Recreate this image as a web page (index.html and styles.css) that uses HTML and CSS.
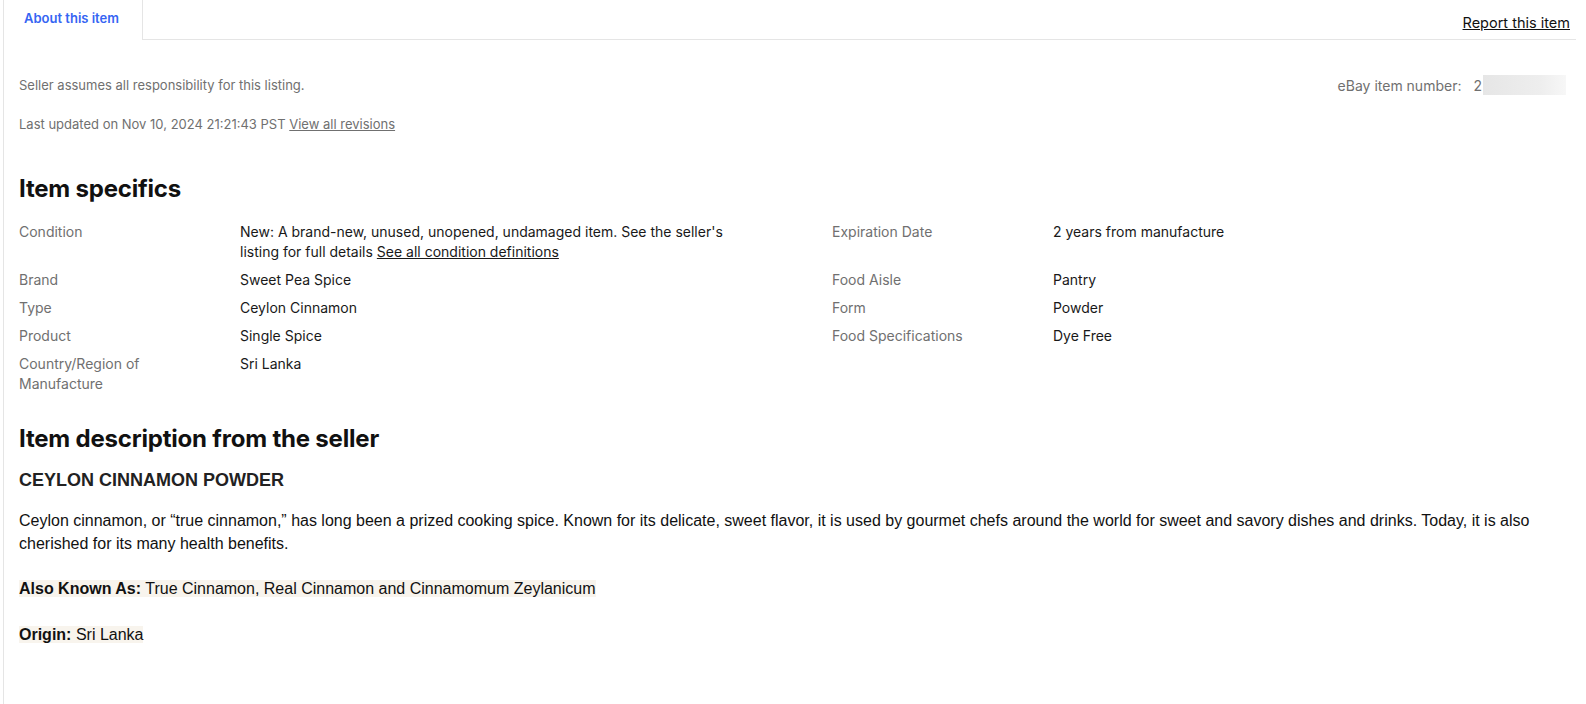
FILE: index.html
```html
<!DOCTYPE html>
<html>
<head>
<meta charset="utf-8">
<link rel="stylesheet" href="styles.css">
</head>
<body>
<div class="panel">
  <div class="tabs">
    <div class="tab active">About this item</div>
    <div class="tabs-rest"><a class="report" href="#">Report this item</a></div>
  </div>
  <div class="content">
    <div class="meta-row">
      <span class="muted">Seller assumes all responsibility for this listing.</span>
      <span class="item-num"><span class="muted">eBay item number:</span><span class="num">2<span class="blur"></span></span></span>
    </div>
    <div class="meta-row updated">
      <span class="muted">Last updated on Nov 10, 2024 21:21:43 PST <a class="muted-link" href="#">View all revisions</a></span>
    </div>

    <h2 class="section-title">Item specifics</h2>
    <div class="specs">
      <div class="spec-row">
        <div class="pair"><div class="lbl">Condition</div><div class="val">New: A brand-new, unused, unopened, undamaged item. See the seller's listing for full details <a href="#" class="link">See all condition definitions</a></div></div>
        <div class="pair"><div class="lbl">Expiration Date</div><div class="val">2 years from manufacture</div></div>
      </div>
      <div class="spec-row">
        <div class="pair"><div class="lbl">Brand</div><div class="val">Sweet Pea Spice</div></div>
        <div class="pair"><div class="lbl">Food Aisle</div><div class="val">Pantry</div></div>
      </div>
      <div class="spec-row">
        <div class="pair"><div class="lbl">Type</div><div class="val">Ceylon Cinnamon</div></div>
        <div class="pair"><div class="lbl">Form</div><div class="val">Powder</div></div>
      </div>
      <div class="spec-row">
        <div class="pair"><div class="lbl">Product</div><div class="val">Single Spice</div></div>
        <div class="pair"><div class="lbl">Food Specifications</div><div class="val">Dye Free</div></div>
      </div>
      <div class="spec-row">
        <div class="pair"><div class="lbl">Country/Region of Manufacture</div><div class="val">Sri Lanka</div></div>
        <div class="pair"></div>
      </div>
    </div>

    <h2 class="section-title desc-title">Item description from the seller</h2>
    <div class="desc">
      <h3 class="desc-head">CEYLON CINNAMON POWDER</h3>
      <p>Ceylon cinnamon, or “true cinnamon,” has long been a prized cooking spice. Known for its delicate, sweet flavor, it is used by gourmet chefs around the world for sweet and savory dishes and drinks. Today, it is also cherished for its many health benefits.</p>
      <p><span class="hl"><b>Also Known As:</b> True Cinnamon, Real Cinnamon and Cinnamomum Zeylanicum</span></p>
      <p><span class="hl"><b>Origin:</b> Sri Lanka</span></p>
    </div>
  </div>
</div>
</body>
</html>
```

FILE: styles.css
```css
* { box-sizing: border-box; }
html, body { margin: 0; padding: 0; background: #fff; }
body {
  font-family: Inter, "Open Sans", Arial, sans-serif;
  color: #191919;
  width: 1586px;
  height: 704px;
  overflow: hidden;
}
.panel {
  margin-left: 3px;
  width: 1573px;
  height: 704px;
  border-left: 1px solid #e5e5e5;
}
.tabs {
  display: flex;
  height: 40px;
}
.tab {
  width: 139px;
  border-right: 1px solid #e5e5e5;
  padding: 10px 0 0 20px;
  font-size: 13px;
  font-weight: 600;
  color: #3665f3;
}
.tabs-rest {
  flex: 1;
  border-bottom: 1px solid #e5e5e5;
  display: flex;
  justify-content: flex-end;
  padding: 14px 6px 0 0;
}
.report {
  color: #111;
  font-size: 14.5px;
  line-height: 17px;
  height: 17px;
  text-decoration: underline;
}
.content {
  padding: 0 10px 0 15px;
}
.meta-row {
  display: flex;
  justify-content: space-between;
  align-items: center;
  font-size: 13px;
  margin-top: 36px;
  height: 18px;
}
.meta-row.updated { margin-top: 21px; }
.muted { color: #707070; }
.muted-link { color: #707070; text-decoration: underline; }
.item-num { display: flex; align-items: center; font-size: 14px; }
.num { color: #707070; margin-left: 12px; display: flex; align-items: center; }
.blur {
  display: inline-block;
  width: 83px;
  height: 20px;
  background: linear-gradient(90deg, #e6e6e6, #eeeeee 70%, #f7f7f7);
  margin-left: 1px;
}
.section-title {
  font-size: 24px;
  font-weight: 700;
  color: #111;
  margin: 42px 0 19px;
  line-height: 28px;
  letter-spacing: -0.2px;
}
.specs { font-size: 14px; line-height: 20px; }
.spec-row { display: flex; margin-bottom: 8px; }
.pair { display: flex; width: 813px; flex: none; }
.pair:last-child { width: auto; flex: 1 1 0; }
.lbl { width: 221px; flex: none; color: #707070; padding-right: 40px; }
.val { width: 510px; color: #191919; }
.pair:last-child .val { width: auto; flex: 1; }
.link { color: #191919; text-decoration: underline; }
.desc-title { margin: 31px 0 16px; }
.desc {
  font-family: "Liberation Sans", Arial, sans-serif;
  font-size: 16px;
  color: #111;
  line-height: 23px;
}
.desc-head {
  font-size: 18px;
  line-height: 22px;
  font-weight: 700;
  margin: 0 0 18px;
  color: #222;
}
.desc p { margin: 0 0 22px; }
.desc p + p { margin-bottom: 23px; }
.hl { background: #f8f4ed; }
```
